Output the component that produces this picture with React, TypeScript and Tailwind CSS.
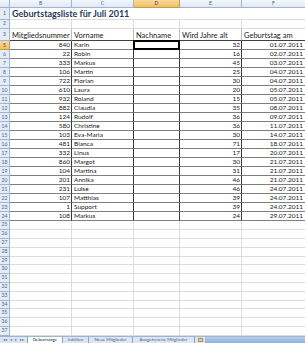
import React from "react";

const data: [string, string, string, string][] = [
  ["840", "Karin", "32", "01.07.2011"],
  ["22", "Robin", "16", "02.07.2011"],
  ["333", "Markus", "45", "03.07.2011"],
  ["106", "Martin", "25", "04.07.2011"],
  ["722", "Florian", "30", "04.07.2011"],
  ["610", "Laura", "20", "05.07.2011"],
  ["932", "Roland", "15", "05.07.2011"],
  ["882", "Claudia", "35", "08.07.2011"],
  ["124", "Rudolf", "36", "09.07.2011"],
  ["580", "Christine", "36", "11.07.2011"],
  ["103", "Eva-Maria", "30", "14.07.2011"],
  ["481", "Bianca", "71", "18.07.2011"],
  ["332", "Linus", "17", "20.07.2011"],
  ["860", "Margot", "30", "21.07.2011"],
  ["104", "Martina", "31", "21.07.2011"],
  ["201", "Annika", "46", "21.07.2011"],
  ["231", "Luise", "46", "24.07.2011"],
  ["107", "Matthias", "39", "24.07.2011"],
  ["1", "Support", "39", "24.07.2011"],
  ["108", "Markus", "24", "29.07.2011"],
];

const emptyRows = [25, 26, 27, 28, 29, 30, 31, 32, 33, 34, 35, 36, 37];

function RowHead({ n, active }: { n: number | string; active?: boolean }) {
  return (
    <div
      className={
        "w-[10px] shrink-0 h-full flex items-center justify-center text-[5px] border-r border-b " +
        (active
          ? "bg-gradient-to-b from-[#f9d99f] to-[#f1c15f] border-[#c29c4f] text-[#3b3b3b]"
          : "bg-[#e4ecf7] border-[#9eb6ce] text-[#4d6185]")
      }
    >
      {n}
    </div>
  );
}

export default function App() {
  return (
    <div
      className="w-[305px] h-[343px] overflow-hidden bg-white flex flex-col text-[#000]"
      style={{ fontFamily: "Lato, 'Liberation Sans', sans-serif" }}
    >
      {/* column headers */}
      <div className="flex h-[8px] shrink-0 text-[5px] text-[#4d6185]">
        <div className="w-[10px] shrink-0 bg-gradient-to-b from-[#f3f6fb] to-[#dde6f2] border-r border-b border-[#9eb6ce]" />
        <div className="w-[62px] shrink-0 flex items-center justify-center bg-gradient-to-b from-[#f3f6fb] to-[#e1e9f5] border-r border-b border-[#9eb6ce]">B</div>
        <div className="w-[62px] shrink-0 flex items-center justify-center bg-gradient-to-b from-[#f3f6fb] to-[#e1e9f5] border-r border-b border-[#9eb6ce]">C</div>
        <div className="w-[46px] shrink-0 flex items-center justify-center bg-gradient-to-b from-[#f9d99f] to-[#f1c15f] border-r border-b border-[#c29c4f] text-[#3b3b3b]">D</div>
        <div className="w-[62px] shrink-0 flex items-center justify-center bg-gradient-to-b from-[#f3f6fb] to-[#e1e9f5] border-r border-b border-[#9eb6ce]">E</div>
        <div className="flex-1 flex items-center justify-center bg-gradient-to-b from-[#f3f6fb] to-[#e1e9f5] border-b border-[#9eb6ce]">F</div>
      </div>

      {/* row 1 title */}
      <div className="flex h-[12px] shrink-0">
        <RowHead n={1} />
        <div className="flex-1 flex items-end pl-[2px] pb-[1px] text-[9px] font-bold text-[#1f3a60] whitespace-nowrap leading-none border-b border-[#dadcdd]">
          Geburtstagsliste für Juli 2011
        </div>
      </div>

      {/* row 2 */}
      <div className="flex h-[9px] shrink-0">
        <RowHead n={2} />
        <div className="w-[62px] shrink-0 border-r border-b border-[#dadcdd]" />
        <div className="w-[62px] shrink-0 border-r border-b border-[#dadcdd]" />
        <div className="w-[46px] shrink-0 border-r border-b border-[#dadcdd]" />
        <div className="w-[62px] shrink-0 border-r border-b border-[#dadcdd]" />
        <div className="flex-1 border-b border-[#dadcdd]" />
      </div>

      {/* row 3 headers */}
      <div className="flex h-[12px] shrink-0 text-[7.5px] leading-none text-[#1a1a1a]">
        <RowHead n={3} />
        <div className="w-[62px] shrink-0 flex items-end pl-[2px] pb-[1px] border-r border-r-[#bdbdbd] border-b border-b-[#404040] whitespace-nowrap">Mitgliedsnummer</div>
        <div className="w-[62px] shrink-0 flex items-end pl-[2px] pb-[1px] border-r border-r-[#bdbdbd] border-b border-b-[#404040] whitespace-nowrap">Vorname</div>
        <div className="w-[46px] shrink-0 flex items-end pl-[2px] pb-[1px] border-r border-r-[#bdbdbd] border-b border-b-[#404040] whitespace-nowrap">Nachname</div>
        <div className="w-[62px] shrink-0 flex items-end pl-[2px] pb-[1px] border-r border-r-[#bdbdbd] border-b border-b-[#404040] whitespace-nowrap">Wird Jahre alt</div>
        <div className="flex-1 flex items-end pl-[2px] pb-[1px] border-b border-b-[#404040] whitespace-nowrap">Geburtstag am</div>
      </div>

      {/* data rows */}
      {data.map((r, i) => (
        <div key={i} className="flex h-[9px] shrink-0 text-[6.5px] leading-none text-[#1a1a1a]">
          <RowHead n={i + 5} active={i === 0} />
          <div className="w-[62px] shrink-0 flex items-center justify-end pr-[1px] border-r border-r-[#3a3a3a] border-b border-b-[#7f7f7f]">{r[0]}</div>
          <div className="w-[62px] shrink-0 flex items-center pl-[2px] border-r border-r-[#3a3a3a] border-b border-b-[#7f7f7f]">{r[1]}</div>
          <div className="w-[46px] shrink-0 relative border-r border-r-[#3a3a3a] border-b border-b-[#7f7f7f]">
            {i === 0 && <div className="absolute left-[-1px] top-[-1px] right-[-1px] bottom-[-1px] border-2 border-black" />}
          </div>
          <div className="w-[62px] shrink-0 flex items-center justify-end pr-[1px] border-r border-r-[#3a3a3a] border-b border-b-[#7f7f7f]">{r[2]}</div>
          <div className="flex-1 flex items-center justify-end pr-[2px] border-b border-b-[#7f7f7f]">{r[3]}</div>
        </div>
      ))}

      {/* empty rows */}
      {emptyRows.map((n) => (
        <div key={n} className={"flex shrink-0 " + (n === 29 || n === 34 ? "h-[8px]" : "h-[9px]")}>
          <RowHead n={n} />
          <div className="w-[62px] shrink-0 border-r border-b border-[#dadcdd]" />
          <div className="w-[62px] shrink-0 border-r border-b border-[#dadcdd]" />
          <div className="w-[46px] shrink-0 border-r border-b border-[#dadcdd]" />
          <div className="w-[62px] shrink-0 border-r border-b border-[#dadcdd]" />
          <div className="flex-1 border-b border-[#dadcdd]" />
        </div>
      ))}

      {/* sheet tabs */}
      <div className="flex h-[7px] shrink-0 text-[4.5px] leading-none items-stretch bg-[#dbe5f3] border-t border-[#9eb6ce]">
        <div className="w-[27px] shrink-0 flex items-center justify-around px-[1px] text-[#5b6f8f] text-[4px]">
          <span>◂◂</span>
          <span>◂</span>
          <span>▸</span>
          <span>▸▸</span>
        </div>
        <div className="w-[36px] shrink-0 flex items-center justify-center bg-white text-[#1a1a1a] border-x border-[#8aa2c4]">Geburtstage</div>
        <div className="w-[26px] shrink-0 flex items-center justify-center text-[#4d6185] border-r border-[#8aa2c4]">Jubiläen</div>
        <div className="w-[44px] shrink-0 flex items-center justify-center text-[#4d6185] border-r border-[#8aa2c4]">Neue Mitglieder</div>
        <div className="w-[62px] shrink-0 flex items-center justify-center text-[#4d6185] border-r border-[#8aa2c4]">Ausgetretene Mitglieder</div>
        <div className="w-[10px] shrink-0 flex items-center justify-center">
          <div className="w-[5px] h-[4px] bg-[#f2d487] border border-[#a89050]" />
        </div>
        <div className="flex-1 bg-gradient-to-b from-[#b7cdee] to-[#8fb0e0]" />
      </div>
    </div>
  );
}
